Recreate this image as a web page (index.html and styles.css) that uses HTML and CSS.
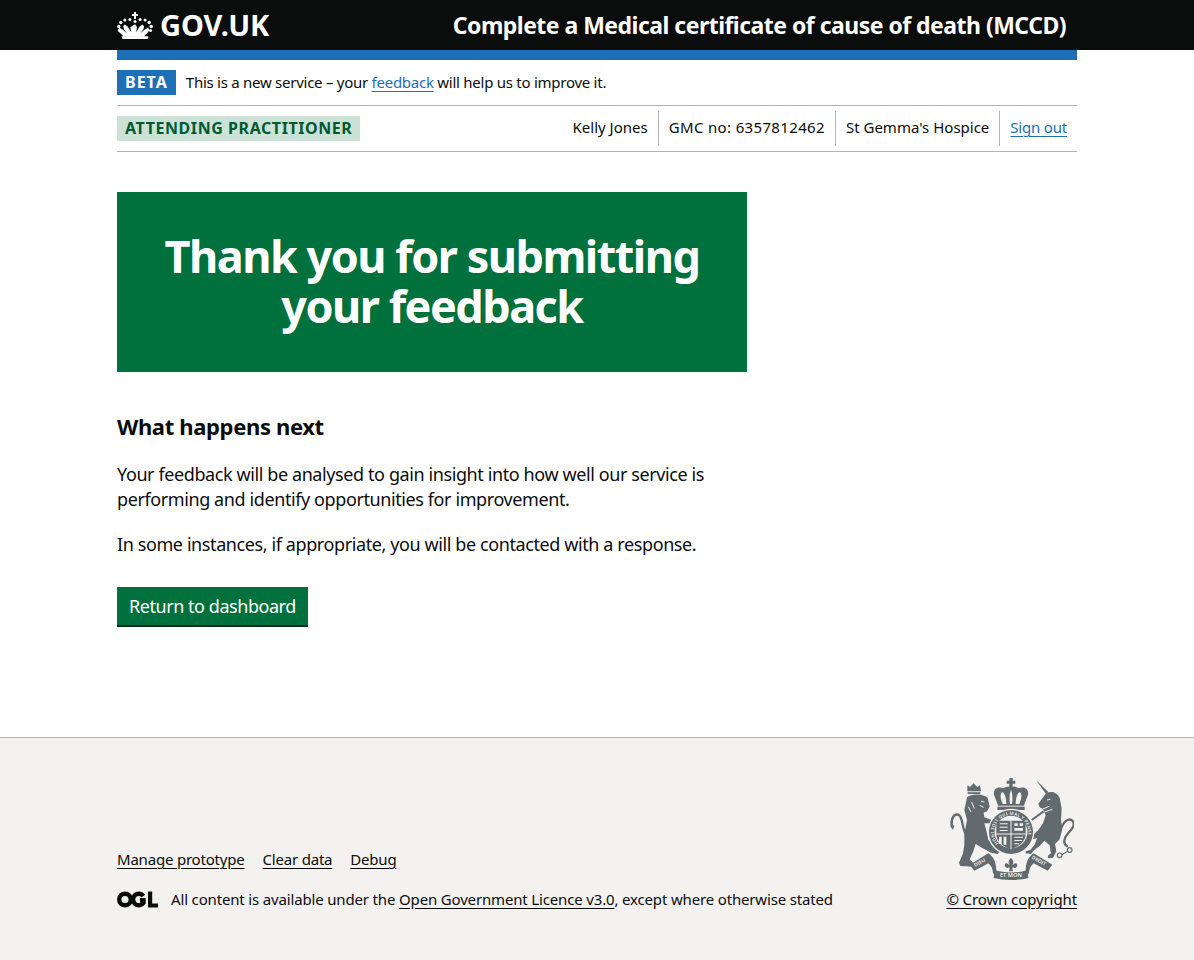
FILE: index.html

```html
<!DOCTYPE html>
<html lang="en">
<head>
<meta charset="utf-8">
<title>Thank you for submitting your feedback</title>
<link rel="stylesheet" href="styles.css">
</head>

<body>
<header class="header">
  <div class="width header-row">
    <a class="logo" href="#">
      <svg class="crown" viewBox="52 30 106 80" width="36" height="27" aria-hidden="true">
        <g fill="#fff">
          <path d="M102 30h6v6h6v6h-6v9h-6v-9h-6v-6h6z"/>
          <circle cx="105" cy="58" r="4.500"/>
          <circle cx="90" cy="52" r="4.500"/><circle cx="120" cy="52" r="4.500"/>
          <circle cx="75" cy="54" r="4.500"/><circle cx="135" cy="54" r="4.500"/>
          <circle cx="63" cy="61" r="5"/><circle cx="147" cy="61" r="5"/>
          <circle cx="57" cy="73" r="5"/><circle cx="153" cy="73" r="5"/>
          <circle cx="59" cy="85" r="4.500"/><circle cx="151" cy="85" r="4.500"/>
          <path d="M105 66l6 9-3 15 11-17 8-6 5 5-2 9-9 12 13-11 10-6 4 7-5 8-9 8-2 4H70l-2-4-9-8-5-8 4-7 10 6 13 11-9-12-2-9 5-5 8 6 11 17-3-15z"/>
          <path d="M65 102h80l-3 8H68z"/>
        </g>
      </svg>
      <span class="logo-text">GOV.UK</span>
    </a>
    <a class="service-name" href="#">Complete a Medical certificate of cause of death (MCCD)</a>
  </div>
</header>

<div class="width">
  <div class="blue-bar"></div>

  <div class="phase-banner">
    <strong class="tag">BETA</strong>
    <span class="phase-text">This is a new service – your <a class="link" href="#">feedback</a> will help us to improve it.</span>
  </div>

  <div class="user-bar">
    <strong class="role-tag">ATTENDING PRACTITIONER</strong>
    <ul class="user-list">
      <li>Kelly Jones</li>
      <li class="gmc">GMC no: 6357812462</li>
      <li>St Gemma's Hospice</li>
      <li class="sign-out"><a class="link" href="#">Sign out</a></li>
    </ul>
  </div>

  <main class="main">
    <div class="column">
      <div class="panel">
        <h1>Thank you for submitting your feedback</h1>
      </div>
      <h2>What happens next</h2>
      <p>Your feedback will be analysed to gain insight into how well our service is performing and identify opportunities for improvement.</p>
      <p>In some instances, if appropriate, you will be contacted with a response.</p>
      <a class="button" href="#">Return to dashboard</a>
    </div>
  </main>
</div>

<footer class="footer">
  <div class="width footer-row">
    <div class="footer-left">
      <ul class="footer-links">
        <li><a href="#">Manage prototype</a></li>
        <li><a href="#">Clear data</a></li>
        <li><a href="#">Debug</a></li>
      </ul>
      <div class="licence">
        <svg class="ogl" viewBox="0 0 41 17" width="41" height="17" aria-hidden="true">
          <g fill="none" stroke="#0b0c0c" stroke-width="4.400">
            <circle cx="8" cy="8.500" r="5.800"/>
            <path d="M26.500 5a5.800 5.800 0 1 0 0 7V9.300h-3.500"/>
          </g>
          <path fill="#0b0c0c" d="M31 .5h4.200v12H41V16.500H31z"/>
        </svg>
        <span>All content is available under the <a href="#">Open Government Licence v3.0</a>, except where otherwise stated</span>
      </div>
    </div>
    <div class="footer-right">
      <svg class="crest" viewBox="54 24 375 306" width="125" height="102" aria-hidden="true">
        <g fill="#626a6e">
          <!-- big crown -->
          <path d="M235 24h10v8h8v9h-8v10h-10V41h-8v-9h8z"/>
          <path d="M240 50c-10-2-18 2-24 5-18-8-32 6-26 22 3 9 9 20 11 30h78c2-10 8-21 11-30 6-16-8-30-26-22-6-3-14-7-24-5zM240 60c5 10 5 28 3 42h-6c-2-14-2-32 3-42zM214 66c8 4 12 20 12 36h-11c-3-10-12-28-1-36zM266 66c11 8 2 26-1 36h-11c0-16 4-32 12-36z"/>
          <rect x="199" y="110" width="82" height="10"/>
          <!-- lion crown -->
          <path d="M109 46l8 5 11-11 11 11 8-5 3 18h-41zM110 67h38v5h-38z"/>
          <!-- lion -->
          <path d="M108 82c10-12 52-12 62 2l6 26-8 14-10 4 2 14 22 8 2 10h-24l8 30 4 20 24 22 14 8-10 12-20-4-30-16-16-10-8 24-10 22 14 14-2 8-40-2-4-10 12-28 4-26v-34l8-40-8-30z"/>
          <path fill="none" stroke="#626a6e" stroke-width="7" stroke-linecap="round" d="M104 192c-12-20-8-52-22-58-14-4-22 12-20 34"/>
          <path d="M58 168l12-2-4 14z"/>
          <!-- unicorn -->
          <path d="M315 30l37 36-7 6z"/>
          <path d="M345 70c15-8 33-4 41 14l6 32-2 34 4 28-8 30-14 14 4 22-10 20h-16l2-8 8-6-4-24-16-14-14 16-16 12-10 12-16-2v-6l14-4 14-18 6-18-10 4-8-8 22-20 14-20 8-24-8-18-10-6-4-10 8-12z"/>
          <g fill="none" stroke="#626a6e">
            <path stroke-width="7" stroke-linecap="round" d="M392 172c8-22 28-32 36-14 6 20-26 30-28 54-1 10 4 14 8 16"/>
            <path stroke-width="6" d="M338 124l-36 26"/>
            <g stroke-width="3.500">
              <circle cx="366" cy="240" r="6"/>
              <circle cx="386" cy="256" r="7"/>
              <circle cx="416" cy="240" r="7"/>
              <path d="M392 254l18-10"/>
            </g>
          </g>
          <!-- ribbons -->
          <path d="M116 284l56-34c18 12 24 30 24 55l-10 7c0-14-4-24-14-32l-42 22z"/>
          <path d="M364 284l-56-34c-18 12-24 30-24 55l10 7c0-14 4-24 14-32l42 22z"/>
          <path d="M190 300c30 10 70 10 100 0l2 24c-30 8-74 8-104 0z"/>
          <!-- fleur -->
          <path d="M240 264c8 6 9 14 4 22l8-6c6-2 10 6 4 12-4 4-8 2-10 0l-2 2 2 10h-12l2-10-2-2c-2 2-6 4-10 0-6-6-2-14 4-12l8 6c-5-8-4-16 4-22z"/>
        </g>
        <!-- lion and unicorn faces and collar -->
        <g fill="none" stroke="#f3f2f1" stroke-width="3">
          <path d="M150 94l10 2M146 106l12 6M122 96l8 20M112 110l8 16"/>
          <path d="M348 90l10-2M334 118l22-10M340 126l24-8"/>
        </g>
        <!-- garter and shield -->
        <circle cx="240" cy="186" r="70" fill="#f3f2f1"/>
        <circle cx="240" cy="186" r="66" fill="#626a6e"/>
        <circle cx="240" cy="186" r="49" fill="#f3f2f1"/>
        <path fill="#626a6e" d="M196 152h88v40c0 24-22 38-44 46-22-8-44-22-44-46z"/>
        <path fill="none" stroke="#f3f2f1" stroke-width="3" d="M240 152v86M196 192h88"/>
        <g fill="#f3f2f1">
          <path d="M206 160h24v3h-24zM206 170h24v3h-24zM206 180h24v3h-24zM250 160h10v8h-10zM266 160h10v8h-10zM250 174h26v8h-26zM204 200h8v22h-8zM218 200h8v24h-8zM250 200h26v3h-26zM250 210h24v3h-24zM250 220h14v3h-14z"/>
        </g>
        <g class="crest-text" fill="#f3f2f1">
          <path id="garter" fill="none" d="M204 222a51 51 0 1 1 72 0"/>
          <text font-size="13" letter-spacing="1"><textPath href="#garter" startOffset="2">HONI SOIT QUI MAL Y PENSE</textPath></text>
          <text font-size="15" transform="translate(133 291) rotate(-30)">DIEU</text>
          <text font-size="15" transform="translate(301 265) rotate(30)">DROIT</text>
          <text font-size="17" x="207" y="321">ET MON</text>
        </g>
      </svg>
      <a class="copyright" href="#">© Crown copyright</a>
    </div>
  </div>
</footer>
</body>
</html>
```

FILE: styles.css

```css
* {
  box-sizing: border-box;
}

body {
  margin: 0;
  font-family: "Noto Sans", "Open Sans", Arial, sans-serif;
  color: #0b0c0c;
  background: #fff;
  font-size: 16px;
}

a {
  color: inherit;
}

ul {
  list-style: none;
  margin: 0;
  padding: 0;
}

.width {
  width: 960px;
  margin-left: 117px;
}

.header {
  background: #0b0c0c;
  height: 50px;
}

.header-row {
  display: flex;
  justify-content: space-between;
  align-items: center;
  height: 50px;
  padding-right: 11px;
}

.logo {
  display: flex;
  align-items: center;
  gap: 7px;
  color: #fff;
  text-decoration: none;
}

.logo-text {
  font-size: 29px;
  line-height: 30px;
  font-weight: 700;
  letter-spacing: -0.1px;
}

.service-name {
  color: #fff;
  text-decoration: none;
  font-size: 23px;
  line-height: 30px;
  font-weight: 700;
  letter-spacing: -0.52px;
}

.blue-bar {
  height: 10px;
  background: #1d70b8;
}

.phase-banner {
  display: flex;
  align-items: center;
  gap: 10px;
  height: 46px;
  border-bottom: 1px solid #b1b4b6;
  font-size: 15px;
  letter-spacing: -0.26px;
}

.phase-text {
  padding-bottom: 2px;
}

.tag {
  background: #1d70b8;
  color: #fff;
  font-size: 16px;
  font-weight: 700;
  line-height: 25px;
  padding: 0 8px;
  letter-spacing: 1px;
}

.link {
  color: #1d70b8;
  text-underline-offset: 3px;
}

.user-bar {
  display: flex;
  justify-content: space-between;
  align-items: center;
  height: 46px;
  border-bottom: 1px solid #b1b4b6;
}

.role-tag {
  background: #cce2d8;
  color: #005a30;
  font-size: 16px;
  font-weight: 700;
  line-height: 25px;
  padding: 0 8px;
  letter-spacing: 0.57px;
}

.user-list {
  display: flex;
  font-size: 15px;
}

.user-list li {
  line-height: 33px;
  padding: 0 10px 2px;
  border-left: 1px solid #b1b4b6;
}

.user-list li:first-child {
  border-left: 0;
}

.user-list .gmc {
  letter-spacing: 0.35px;
}

.user-list .sign-out {
  letter-spacing: -0.2px;
}

.main {
  padding-top: 40px;
  height: 585px;
}

.column {
  width: 630px;
}

.panel {
  background: #00703c;
  color: #fff;
  height: 180px;
  padding: 39px 30px;
  text-align: center;
}

h1 {
  margin: 0;
  font-size: 45px;
  line-height: 50px;
  font-weight: 700;
  letter-spacing: -1.5px;
}

h2 {
  margin: 39px 0 21px;
  font-size: 22px;
  line-height: 30px;
  font-weight: 700;
  letter-spacing: -0.35px;
}

p {
  margin: 0 0 20px;
  font-size: 18px;
  line-height: 25px;
  letter-spacing: -0.4px;
}

.button {
  display: inline-block;
  margin-top: 10px;
  height: 38px;
  padding: 0 12px;
  background: #00703c;
  box-shadow: 0 2px 0 #002d18;
  color: #fff;
  font-size: 18px;
  line-height: 38px;
  text-decoration: none;
  letter-spacing: -0.45px;
}

.footer {
  height: 223px;
  background: #f3f2f1;
  border-top: 1px solid #b1b4b6;
}

.footer-row {
  display: flex;
  justify-content: space-between;
  align-items: flex-end;
  height: 171px;
}

.footer-links {
  display: flex;
  gap: 18px;
  font-size: 15px;
  line-height: 20px;
  letter-spacing: -0.2px;
  margin-bottom: 20px;
}

.footer a {
  text-underline-offset: 3px;
}

.licence {
  display: flex;
  align-items: center;
  gap: 13px;
  font-size: 15px;
  line-height: 20px;
  letter-spacing: -0.16px;
}

.ogl {
  flex: none;
}

.footer-right {
  display: flex;
  flex-direction: column;
  align-items: center;
  font-size: 15px;
  line-height: 20px;
  letter-spacing: -0.1px;
}

.crest {
  margin-bottom: 9px;
}

.crest-text {
  font-weight: 600;
}
```
